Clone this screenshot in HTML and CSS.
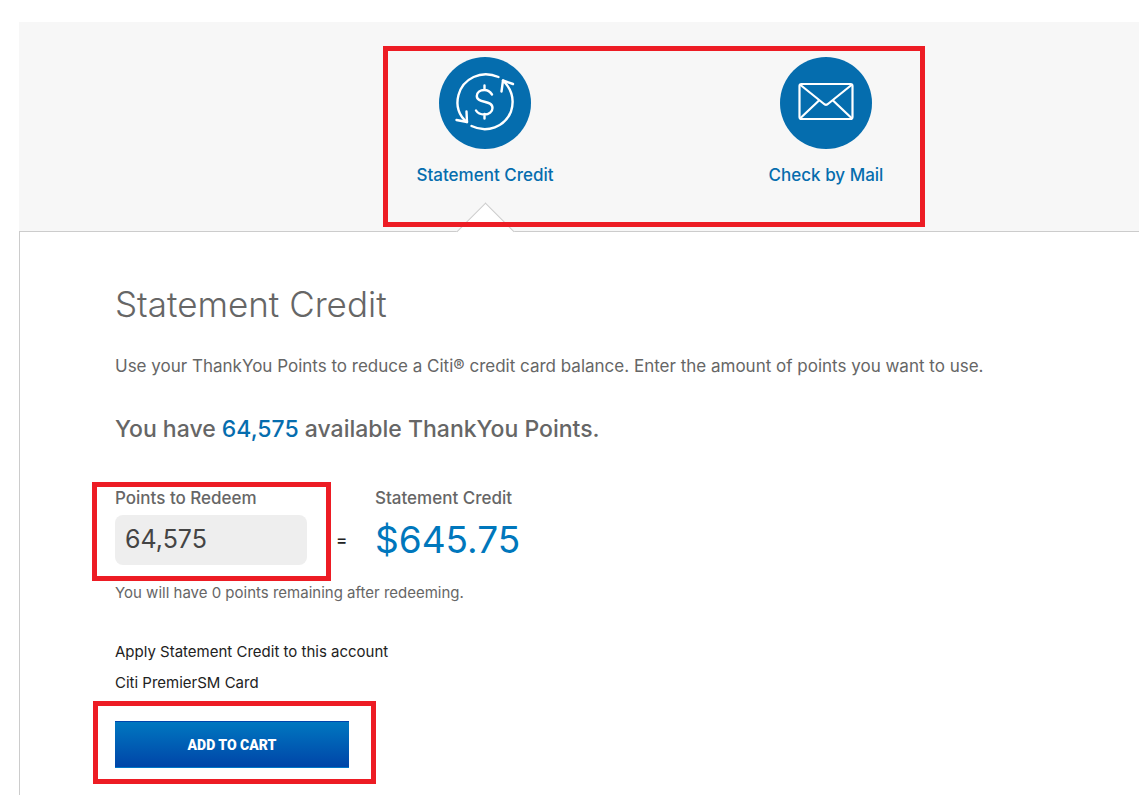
FILE: index.html
```html
<!DOCTYPE html>
<html lang="en">
<head>
<meta charset="utf-8">
<meta name="viewport" content="width=device-width, initial-scale=1">
<title>Statement Credit</title>
<link rel="stylesheet" href="styles.css">
</head>
<body>
<div class="page">
  <header class="options">
    <nav class="tabs" aria-label="Redemption options">
      <a class="tab tab-active" href="#statement-credit" aria-current="page">
        <svg class="tab-icon" viewBox="0 0 92 92" aria-hidden="true">
          <circle cx="46" cy="46" r="46" fill="#056dae"/>
          <g fill="none" stroke="#fff" stroke-width="2.4" stroke-linecap="round" stroke-linejoin="round">
            <path d="M59.5 20C42 12.500 24 21.500 19.500 38C16.500 49 20 59 28 65"/>
            <path d="M17.500 63L28 65L27.500 54.500"/>
            <path d="M32.500 69C48 76.500 66 70 72 54.500C76 42 71.500 31 64 23.500"/>
            <path d="M74 27L64 23.500L62.500 34.500"/>
            <path d="M45.500 28.500V33M45.500 57V61.500M53 37.500C51 34.500 48.500 33 45.500 33C41 33 37.800 35.500 37.800 39C37.800 47 53.500 42.500 53.500 51C53.500 54.500 50 57.500 45.500 57.500C41.500 57.500 38.500 56 37 53.500"/>
          </g>
        </svg>
        <span>Statement Credit</span>
      </a>
      <a class="tab" href="#check-by-mail">
        <svg class="tab-icon" viewBox="0 0 92 92" aria-hidden="true">
          <circle cx="46" cy="46" r="46" fill="#056dae"/>
          <g fill="none" stroke="#fff" stroke-width="2.2" stroke-linecap="round" stroke-linejoin="round">
            <rect x="19.500" y="27" width="53" height="35" rx="2"/>
            <path d="M20.500 28L43.500 46.500Q46 49 48.500 46.500L71.500 28M39 43.500L20.500 61M53 43.500L71.500 61"/>
          </g>
        </svg>
        <span>Check by Mail</span>
      </a>
    </nav>
  </header>
  <main class="panel" id="statement-credit">
    <h1>Statement Credit</h1>
    <p class="intro">Use your ThankYou Points to reduce a Citi® credit card balance. Enter the amount of points you want to use.</p>
    <h2>You have <span class="balance">64,575</span> available ThankYou Points.</h2>
    <form>
      <div class="redeem">
        <div class="field">
          <label for="points">Points to Redeem</label>
          <input id="points" type="text" value="64,575">
        </div>
        <span class="equals">=</span>
        <div class="credit">
          <label for="amount">Statement Credit</label>
          <output id="amount" for="points">$645.75</output>
        </div>
      </div>
      <p class="remaining">You will have 0 points remaining after redeeming.</p>
      <p class="account">Apply Statement Credit to this account</p>
      <p class="account">Citi PremierSM Card</p>
      <div class="action">
        <button type="submit">ADD TO CART</button>
      </div>
    </form>
  </main>
</div>
</body>
</html>
```
FILE: styles.css
```css
* {
  box-sizing: border-box;
}

body {
  margin: 0;
  background: #fff;
  color: #666;
  font-family: Inter, "Liberation Sans", sans-serif;
}

h1, h2, p {
  margin: 0;
}

.page {
  display: flex;
  flex-direction: column;
  min-height: 100vh;
  padding: 22px 0 0 19px;
}

/* Redemption option tabs */
.options {
  padding: 35px 0 0 366px;
  background: #f7f7f7;
}

.tabs {
  position: relative;
  display: flex;
  gap: 141px;
  width: fit-content;
}

.tab {
  position: relative;
  display: flex;
  flex-direction: column;
  align-items: center;
  gap: 14px;
  width: 200px;
  padding-bottom: 44px;
  color: #056dae;
  font-size: 17px;
  font-weight: 500;
  line-height: 24px;
  text-decoration: none;
}

.tab-icon {
  width: 92px;
  height: 92px;
}

.tab-active::after {
  content: "";
  position: absolute;
  bottom: -21px;
  left: calc(50% - 20px);
  width: 40px;
  height: 40px;
  border: 1px solid #ccc;
  border-width: 1px 0 0 1px;
  background: #fff;
  transform: rotate(45deg);
}

/* Red call-out frames */
.tabs::after,
.field::after,
.action::after {
  content: "";
  position: absolute;
  border: 5px solid #ed1c24;
  pointer-events: none;
}

.tabs::after {
  inset: -11px 1px 4px -2px;
}

.field::after {
  inset: -5px -24px -16px -23px;
}

.action::after {
  inset: -20px -27px -16px -22px;
}

/* Redemption form */
.panel {
  flex: 1;
  padding: 48px 24px 27px 95px;
  border: 1px solid #ccc;
  border-width: 1px 0 0 1px;
}

h1 {
  font-size: 35px;
  font-weight: 300;
  line-height: 48px;
}

.intro {
  margin-top: 24px;
  font-size: 17px;
  font-weight: 400;
  line-height: 28px;
}

h2 {
  margin-top: 31px;
  font-size: 23px;
  font-weight: 500;
  line-height: 36px;
}

.balance {
  color: #056dae;
}

.redeem {
  display: flex;
  margin-top: 40px;
}

.field,
.credit {
  position: relative;
  display: flex;
  flex-direction: column;
  gap: 6px;
}

.field {
  width: 192px;
}

label {
  font-size: 17px;
  font-weight: 500;
  line-height: 22px;
}

input {
  width: 100%;
  height: 50px;
  padding: 0 10px 2px;
  border: 0;
  border-radius: 8px;
  background: #eee;
  color: #444;
  font: 400 25px Inter, "Liberation Sans", sans-serif;
}

.equals {
  align-self: flex-end;
  width: 68px;
  padding-left: 29px;
  color: #222;
  font-size: 17px;
  font-weight: 500;
  line-height: 50px;
}

output {
  color: #0077bc;
  font-size: 37px;
  line-height: 50px;
}

.remaining {
  margin-top: 16px;
  font-size: 15px;
  font-weight: 400;
  line-height: 24px;
}

.account {
  margin-top: 7px;
  color: #222;
  font-size: 15px;
  font-weight: 400;
  line-height: 24px;
}

.remaining + .account {
  margin-top: 35px;
}

.action {
  position: relative;
  width: fit-content;
  margin-top: 26px;
}

button {
  display: block;
  width: 234px;
  height: 47px;
  padding: 0;
  border: 1px solid #0046ad;
  border-width: 1px 0;
  border-bottom-color: #0077c8;
  background: linear-gradient(#0077c0, #0045a8);
  color: #fff;
  font: 900 14px Roboto, "Liberation Sans", sans-serif;
}
```
